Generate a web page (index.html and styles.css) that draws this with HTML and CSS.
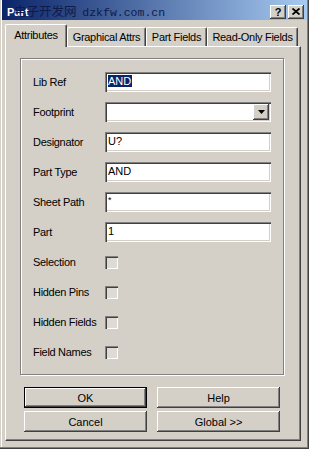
FILE: index.html
```html
<!DOCTYPE html>
<html lang="en">
<head>
    <meta charset="UTF-8">
    <meta name="viewport" content="width=device-width, initial-scale=1.0">
    <title>Part</title>
    <link rel="stylesheet" href="styles.css">
</head>
<body>
    <div class="window">
        <div class="titlebar">
            <span class="title">Part</span>
            <span class="watermark">电子开发网 <span class="wm-url">dzkfw.com.cn</span></span>
            <div class="title-buttons">
                <span class="tbtn">?</span>
                <span class="tbtn">
                    <svg width="8" height="7" viewBox="0 0 8 7"><path d="M0.5 0.5 L7.5 6.5 M7.5 0.5 L0.5 6.5" stroke="#000" stroke-width="1.8"/></svg>
                </span>
            </div>
        </div>

        <div class="tabs">
            <div class="tab active tab-attr">Attributes</div>
            <div class="tab tab-graph">Graphical Attrs</div>
            <div class="tab tab-fields">Part Fields</div>
            <div class="tab tab-ro">Read-Only Fields</div>
        </div>

        <div class="panel">
            <div class="group">
                <div class="row"><span class="label">Lib Ref</span><div class="field"><span class="selected">AND</span></div></div>
                <div class="row"><span class="label">Footprint</span><div class="field combo"><span class="drop"><svg width="7" height="4" viewBox="0 0 7 4"><path d="M0 0 H7 L3.5 4 Z" fill="#000"/></svg></span></div></div>
                <div class="row"><span class="label">Designator</span><div class="field">U?</div></div>
                <div class="row"><span class="label">Part Type</span><div class="field">AND</div></div>
                <div class="row"><span class="label">Sheet Path</span><div class="field small">*</div></div>
                <div class="row"><span class="label">Part</span><div class="field">1</div></div>
                <div class="row"><span class="label">Selection</span><span class="check"></span></div>
                <div class="row"><span class="label">Hidden Pins</span><span class="check"></span></div>
                <div class="row"><span class="label">Hidden Fields</span><span class="check"></span></div>
                <div class="row"><span class="label">Field Names</span><span class="check"></span></div>
            </div>

            <div class="buttons">
                <button class="btn default">OK</button>
                <button class="btn">Help</button>
                <button class="btn">Cancel</button>
                <button class="btn">Global &gt;&gt;</button>
            </div>
        </div>
    </div>
</body>
</html>
```

FILE: styles.css
```css
body {
    margin: 0;
    background: #d4d0c8;
    font-family: "Liberation Sans", Arial, sans-serif;
    font-size: 11px;
    color: #000;
}

/* dialog frame */
.window {
    width: 309px;
    height: 449px;
    box-sizing: border-box;
    padding: 0 2px;
    background: #d4d0c8;
    box-shadow: inset -1px -1px #404040, inset -2px -2px #808080, inset 1px 0 #d4d0c8, inset 2px 0 #fff;
}

.titlebar {
    position: relative;
    height: 20px;
    box-sizing: border-box;
    padding: 3px 3px 0 5px;
    display: flex;
    align-items: center;
    background: linear-gradient(to right, #0a246a, #a6caf0);
}

.title {
    color: #fff;
    font-weight: bold;
    font-size: 11px;
}

/* site watermark stamped over the caption */
.watermark {
    position: absolute;
    left: 12px;
    top: 3px;
    color: #0e1a48;
    font-family: "Noto Sans CJK SC", sans-serif;
    font-size: 12.5px;
    line-height: 16px;
}

.wm-url {
    font-family: "Liberation Mono", monospace;
    font-size: 11.5px;
    margin-left: 3px;
}

.title-buttons {
    margin-left: auto;
    display: flex;
    gap: 2px;
}

.tbtn {
    width: 16px;
    height: 14px;
    box-sizing: border-box;
    display: flex;
    align-items: center;
    justify-content: center;
    background: #d4d0c8;
    font-weight: bold;
    font-size: 11px;
    box-shadow: inset -1px -1px #404040, inset 1px 1px #fff, inset -2px -2px #808080;
}

/* tab strip */
.tabs {
    display: flex;
    align-items: flex-end;
    height: 24px;
    margin-top: 2px;
    padding-left: 5px;
}

.tab {
    box-sizing: border-box;
    height: 19px;
    border-top: 1px solid #fff;
    border-left: 1px solid #fff;
    border-right: 1px solid #404040;
    border-radius: 2px 2px 0 0;
    box-shadow: inset -1px 0 #808080;
    text-align: center;
    line-height: 19px;
    letter-spacing: -0.3px;
    white-space: nowrap;
}

.tab.active {
    height: 23px;
    margin-left: -2px;
    margin-bottom: -1px;
    position: relative;
    z-index: 1;
    background: #d4d0c8;
    line-height: 20px;
}

.tab-attr { width: 62px; }
.tab-graph { width: 79px; }
.tab-fields { width: 61px; }
.tab-ro { width: 91px; }

.panel {
    width: 296px;
    height: 395px;
    margin-left: 3px;
    box-sizing: border-box;
    padding: 11px 0 0 14px;
    border-top: 1px solid #fff;
    border-left: 1px solid #fff;
    border-right: 1px solid #404040;
    border-bottom: 1px solid #404040;
    box-shadow: inset -1px -1px #808080;
}

/* etched group box */
.group {
    width: 264px;
    height: 317px;
    box-sizing: border-box;
    padding: 8px 0 0 12px;
    border: 1px solid #808080;
    box-shadow: inset 1px 1px #fff, 1px 1px #fff;
}

.row {
    height: 30px;
    display: flex;
    align-items: center;
}

.label {
    width: 72px;
    letter-spacing: -0.3px;
    white-space: nowrap;
}

.field {
    width: 166px;
    height: 20px;
    box-sizing: border-box;
    padding: 2px 0 0 3px;
    background: #fff;
    line-height: 15px;
    box-shadow: inset 1px 1px #808080, inset 2px 2px #404040, inset -1px -1px #fff, inset -2px -2px #d4d0c8;
}

.field.small {
    font-size: 9px;
    line-height: 12px;
}

.selected {
    background: #0a246a;
    color: #fff;
    padding: 0 1px 0 0;
}

.combo {
    display: flex;
    justify-content: flex-end;
    padding: 2px 2px 2px 0;
}

.drop {
    width: 16px;
    height: 16px;
    box-sizing: border-box;
    display: flex;
    align-items: center;
    justify-content: center;
    background: #d4d0c8;
    box-shadow: inset -1px -1px #404040, inset 1px 1px #fff, inset -2px -2px #808080;
}

.check {
    width: 13px;
    height: 13px;
    box-sizing: border-box;
    background: #dedbd4;
    box-shadow: inset 1px 1px #808080, inset 2px 2px #404040, inset -1px -1px #fff;
}

/* dialog buttons */
.buttons {
    display: grid;
    grid-template-columns: 123px 123px;
    grid-auto-rows: 21px;
    column-gap: 10px;
    row-gap: 3px;
    margin: 12px 0 0 4px;
}

.btn {
    font-family: "Liberation Sans", Arial, sans-serif;
    font-size: 11px;
    background: #d4d0c8;
    border: none;
    padding: 0;
    color: #000;
    box-shadow: inset -1px -1px #404040, inset 1px 1px #fff, inset -2px -2px #808080;
}

.btn.default {
    border: 1px solid #000;
}
```
